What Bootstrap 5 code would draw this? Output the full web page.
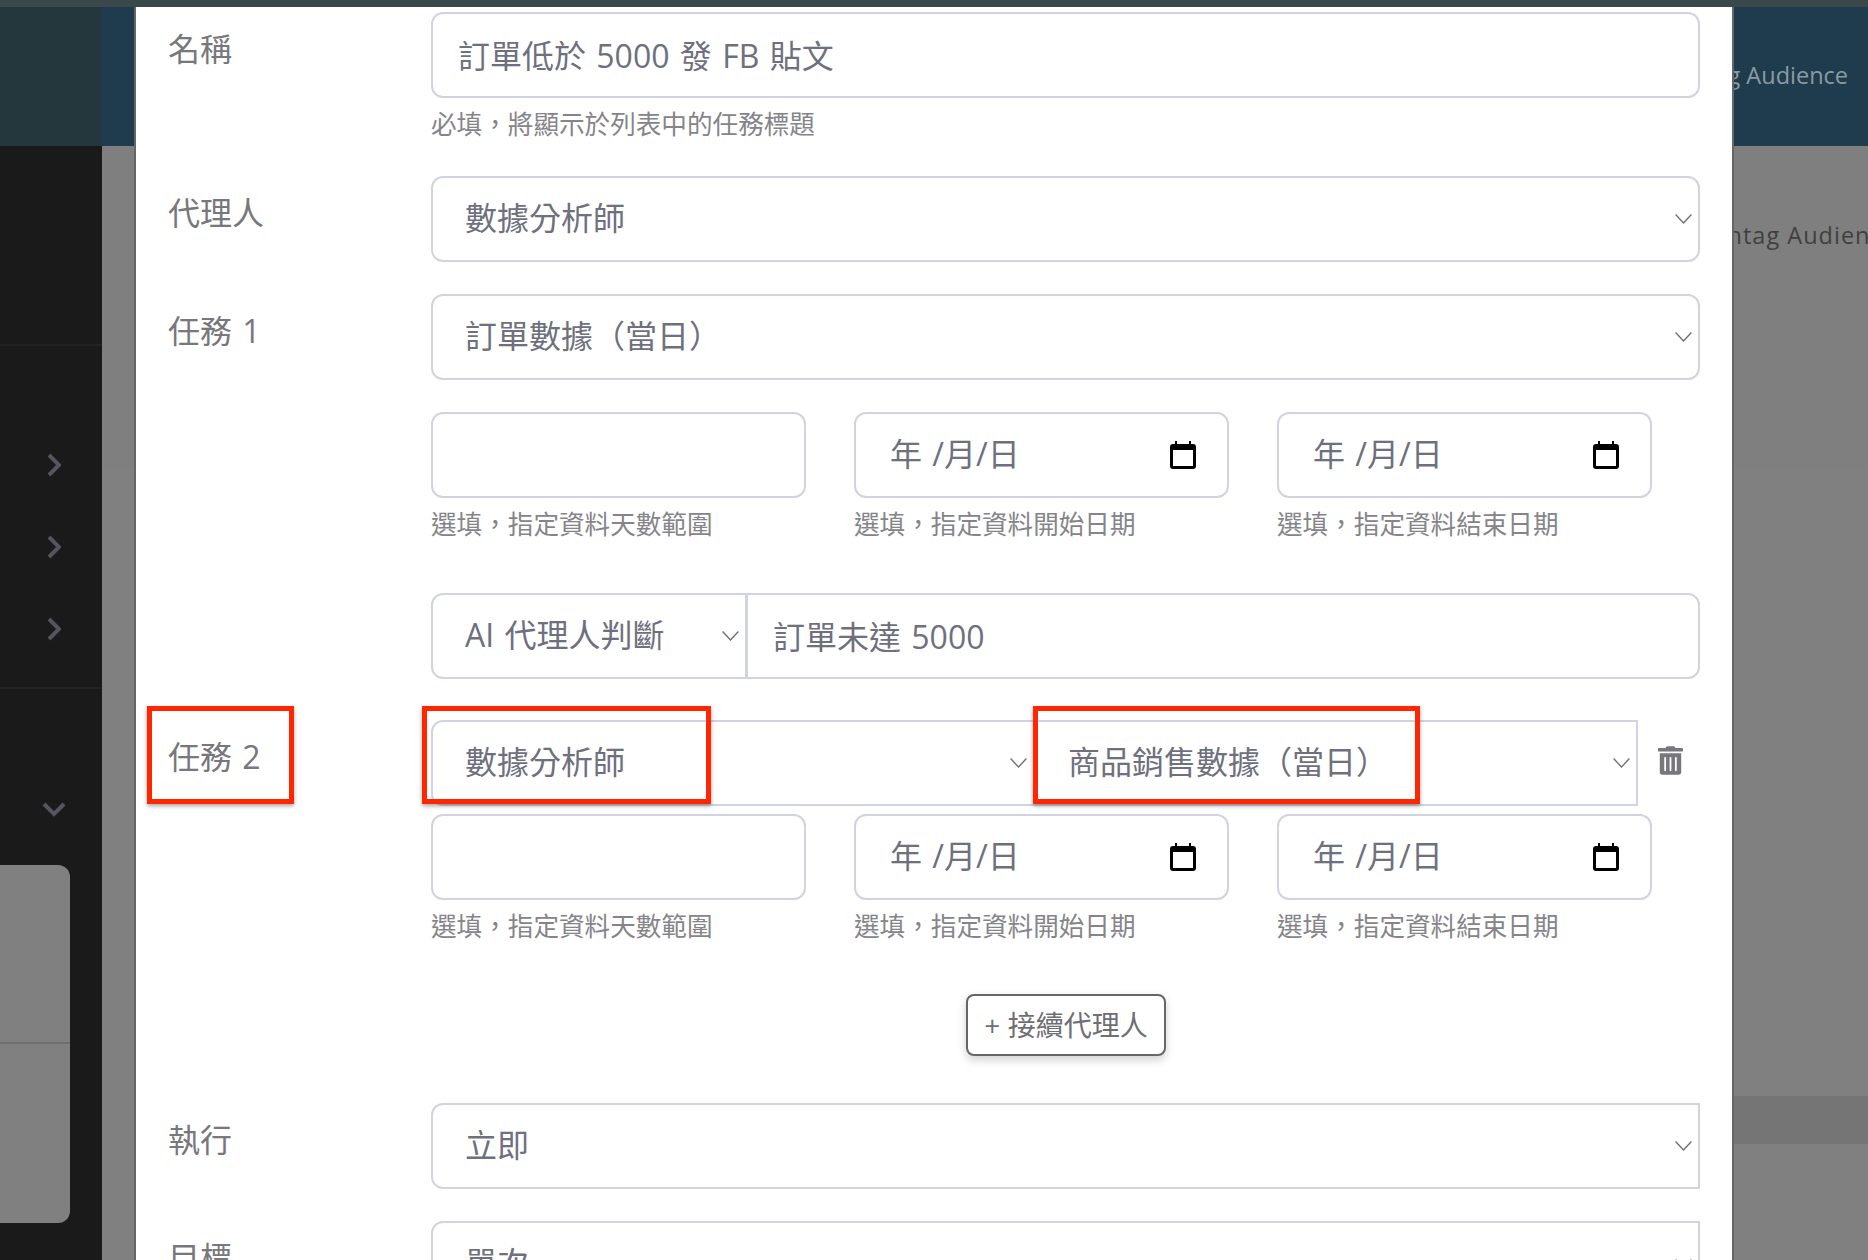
<!DOCTYPE html>
<html lang="zh-Hant">
<head>
<meta charset="utf-8">
<title>任務設定</title>
<link href="https://cdn.jsdelivr.net/npm/bootstrap@5.3.0/dist/css/bootstrap.min.css" rel="stylesheet">
<style>
html,body{height:1260px;overflow:hidden;}
body{font-family:"Open Sans","Noto Sans CJK TC",sans-serif;background:#808080;}
.shell{height:1260px;width:1868px;position:relative;overflow:hidden;}
.top-strip{height:7px;background:#3a474b;}
.layout{height:1253px;}
.side-col{width:102px;flex:none;background:#1a1a1a;}
.side-head{height:139px;background:#24373d;}
.side-gap-a{height:200px;border-bottom:2px solid #222;}
.side-links{height:343px;border-bottom:2px solid #222;padding:107px 0 0 47px;display:flex;flex-direction:column;gap:58px;}
.side-links svg{display:block;}
.side-down{padding:113px 0 0 42px;height:176px;}
.side-card{width:70px;height:358px;background:#808080;border-radius:0 12px 12px 0;}
.side-card-top{height:179px;border-bottom:2px solid #6f6f6f;}
.main-col{flex:1 1 auto;min-width:0;overflow:hidden;}
.outside-text{font-size:23.5px;white-space:nowrap;}
.main-head{height:139px;background:#1f3c4e;color:#8b9aa2;padding:51px 20px 0 0;}
.main-a{height:321px;background:#7f7f7f;padding:72px 0 0 1581px;color:#3f3f3f;letter-spacing:1px;}
.main-b{height:793px;background:#808080;padding-top:629px;}
.main-c{height:48px;margin-left:1632px;background:#757575;}
.dialog-sheet{position:absolute;left:136px;top:7px;width:1596px;height:1253px;background:#fff;box-shadow:-2px 0 0 #666,2px 0 0 #666;padding:5px 32px 0 32px;overflow:hidden;word-spacing:2px;}
.field-row{display:flex;}
.field-label{width:263px;flex:none;font-size:32px;line-height:48px;padding-top:12.5px;color:#77777c;}
.field-body{flex:1 1 auto;min-width:0;}
.ctl.form-control,.ctl.form-select{height:86px;font-size:32px;line-height:48px;color:#6e707e;border:2px solid #d1d3e2;border-radius:12px;font-family:inherit;box-shadow:none;word-spacing:2px;}
.ctl.form-control{padding:0 25px 3px;}
.ctl.form-select{padding:0 40px 2px 32px;background-image:url("data:image/svg+xml,%3csvg xmlns='http://www.w3.org/2000/svg' viewBox='0 0 17 10'%3e%3cpath fill='none' stroke='%236e707e' stroke-width='1.4' d='M.6.6l7.9 8.4L16.4.6'/%3e%3c/svg%3e");background-size:17px 10px;background-position:right 6px center;}
.square-right.form-select{border-top-right-radius:0;border-bottom-right-radius:0;}
.ai-pick.form-select{flex:0 0 316px;width:316px;}
.ctl.date-ctl.form-control{padding:0 34px 6px;background-image:url("data:image/svg+xml,%3csvg xmlns='http://www.w3.org/2000/svg' viewBox='0 0 26 28'%3e%3cpath fill='%23000' d='M5 0h2v3h12V0h2v3h2a3 3 0 0 1 3 3v19a3 3 0 0 1-3 3H3a3 3 0 0 1-3-3V6a3 3 0 0 1 3-3h2zM3 9v16h20V9z'/%3e%3c/svg%3e");background-repeat:no-repeat;background-size:26px 28px;background-position:right 31px top 27px;}
.hint{font-size:25.6px;line-height:38px;margin-top:8px;color:#858589;white-space:nowrap;}
.tri{display:flex;gap:48px;width:1221px;flex:none;}
.tri-cell{width:375px;flex:none;}
.m32{margin-bottom:32px;}
.m48{margin-bottom:49px;}
.m40{margin-bottom:41px;}
.m8{margin-bottom:8px;}
.trash-slot{width:62px;flex:none;padding-left:20px;padding-top:26px;}
.trash-slot svg{display:block;}
.add-wrap{padding:48px 0 47px 535px;}
.add-btn.btn{font-size:28px;line-height:38px;height:62px;width:200px;padding:0;color:#6f6f73;border:2px solid #666;border-radius:8px;background:#fff;box-shadow:0 4px 10px rgba(0,0,0,.18);white-space:nowrap;}
.callout{position:absolute;top:699px;height:98px;border:5px solid #ff2600;box-shadow:0 2px 4px rgba(0,0,0,.35);pointer-events:none;}
.c-a{left:11px;width:147px;}
.c-b{left:286px;width:289px;}
.c-c{left:897px;width:387px;}
</style>
</head>
<body>
<div class="shell">
  <div class="top-strip"></div>
  <div class="layout d-flex">
    <aside class="side-col">
      <div class="side-head"></div>
      <div class="side-gap-a"></div>
      <div class="side-links">
        <svg width="14" height="24" viewBox="0 0 14 24"><path d="M2 2l10 10L2 22" fill="none" stroke="#54555f" stroke-width="4"/></svg>
        <svg width="14" height="24" viewBox="0 0 14 24"><path d="M2 2l10 10L2 22" fill="none" stroke="#54555f" stroke-width="4"/></svg>
        <svg width="14" height="24" viewBox="0 0 14 24"><path d="M2 2l10 10L2 22" fill="none" stroke="#54555f" stroke-width="4"/></svg>
      </div>
      <div class="side-down"><svg width="24" height="15" viewBox="0 0 24 15" class="d-block"><path d="M2 2l10 10L22 2" fill="none" stroke="#54555f" stroke-width="4"/></svg></div>
      <div class="side-card"><div class="side-card-top"></div></div>
    </aside>
    <main class="main-col">
      <div class="main-head outside-text d-flex justify-content-end"><span>Hashtag Audience</span></div>
      <div class="main-a outside-text">Hashtag Audience</div>
      <div class="main-b"><div class="main-c"></div></div>
    </main>
  </div>

  <div class="dialog-sheet">
    <div class="field-row m32">
      <div class="field-label">名稱</div>
      <div class="field-body">
        <input class="ctl form-control" type="text" value="訂單低於 5000 發 FB 貼文">
        <div class="hint">必填&#xFF0C;將顯示於列表中的任務標題</div>
      </div>
    </div>
    <div class="field-row m32">
      <div class="field-label">代理人</div>
      <div class="field-body"><select class="ctl form-select"><option>數據分析師</option></select></div>
    </div>
    <div class="field-row m32">
      <div class="field-label">任務 1</div>
      <div class="field-body"><select class="ctl form-select"><option>訂單數據&#xFF08;當日&#xFF09;</option></select></div>
    </div>
    <div class="field-row m48">
      <div class="field-label"></div>
      <div class="field-body tri">
        <div class="tri-cell"><input class="ctl form-control" type="text"><div class="hint">選填&#xFF0C;指定資料天數範圍</div></div>
        <div class="tri-cell"><input class="ctl date-ctl form-control" type="text" value="年 /月/日"><div class="hint">選填&#xFF0C;指定資料開始日期</div></div>
        <div class="tri-cell"><input class="ctl date-ctl form-control" type="text" value="年 /月/日"><div class="hint">選填&#xFF0C;指定資料結束日期</div></div>
      </div>
    </div>
    <div class="field-row m40">
      <div class="field-label"></div>
      <div class="field-body input-group">
        <select class="ctl ai-pick form-select"><option>AI 代理人判斷</option></select>
        <input class="ctl form-control" type="text" value="訂單未達 5000">
      </div>
    </div>
    <div class="field-row m8">
      <div class="field-label">任務 2</div>
      <div class="field-body d-flex">
        <div class="input-group flex-grow-1 w-auto">
          <select class="ctl form-select"><option>數據分析師</option></select>
          <select class="ctl form-select square-right"><option>商品銷售數據&#xFF08;當日&#xFF09;</option></select>
        </div>
        <div class="trash-slot">
          <svg width="25" height="29" viewBox="0 0 448 512"><path fill="#77777c" d="M32 464a48 48 0 0 0 48 48h288a48 48 0 0 0 48-48V128H32zm272-256a16 16 0 0 1 32 0v224a16 16 0 0 1-32 0zm-96 0a16 16 0 0 1 32 0v224a16 16 0 0 1-32 0zm-96 0a16 16 0 0 1 32 0v224a16 16 0 0 1-32 0zM432 32H312l-9.4-18.7A24 24 0 0 0 281.1 0H166.8a23.72 23.72 0 0 0-21.4 13.3L136 32H16A16 16 0 0 0 0 48v32a16 16 0 0 0 16 16h416a16 16 0 0 0 16-16V48a16 16 0 0 0-16-16z"/></svg>
        </div>
      </div>
    </div>
    <div class="field-row">
      <div class="field-label"></div>
      <div class="field-body tri">
        <div class="tri-cell"><input class="ctl form-control" type="text"><div class="hint">選填&#xFF0C;指定資料天數範圍</div></div>
        <div class="tri-cell"><input class="ctl date-ctl form-control" type="text" value="年 /月/日"><div class="hint">選填&#xFF0C;指定資料開始日期</div></div>
        <div class="tri-cell"><input class="ctl date-ctl form-control" type="text" value="年 /月/日"><div class="hint">選填&#xFF0C;指定資料結束日期</div></div>
      </div>
    </div>
    <div class="field-row">
      <div class="field-label"></div>
      <div class="field-body add-wrap"><button type="button" class="btn add-btn">+ 接續代理人</button></div>
    </div>
    <div class="field-row m32">
      <div class="field-label">執行</div>
      <div class="field-body"><select class="ctl form-select square-right"><option>立即</option></select></div>
    </div>
    <div class="field-row m32">
      <div class="field-label">目標</div>
      <div class="field-body"><select class="ctl form-select square-right"><option>單次</option></select></div>
    </div>

    <div class="callout c-a"></div>
    <div class="callout c-b"></div>
    <div class="callout c-c"></div>
  </div>
</div>
<script src="https://cdn.jsdelivr.net/npm/bootstrap@5.3.0/dist/js/bootstrap.bundle.min.js"></script>
</body>
</html>
